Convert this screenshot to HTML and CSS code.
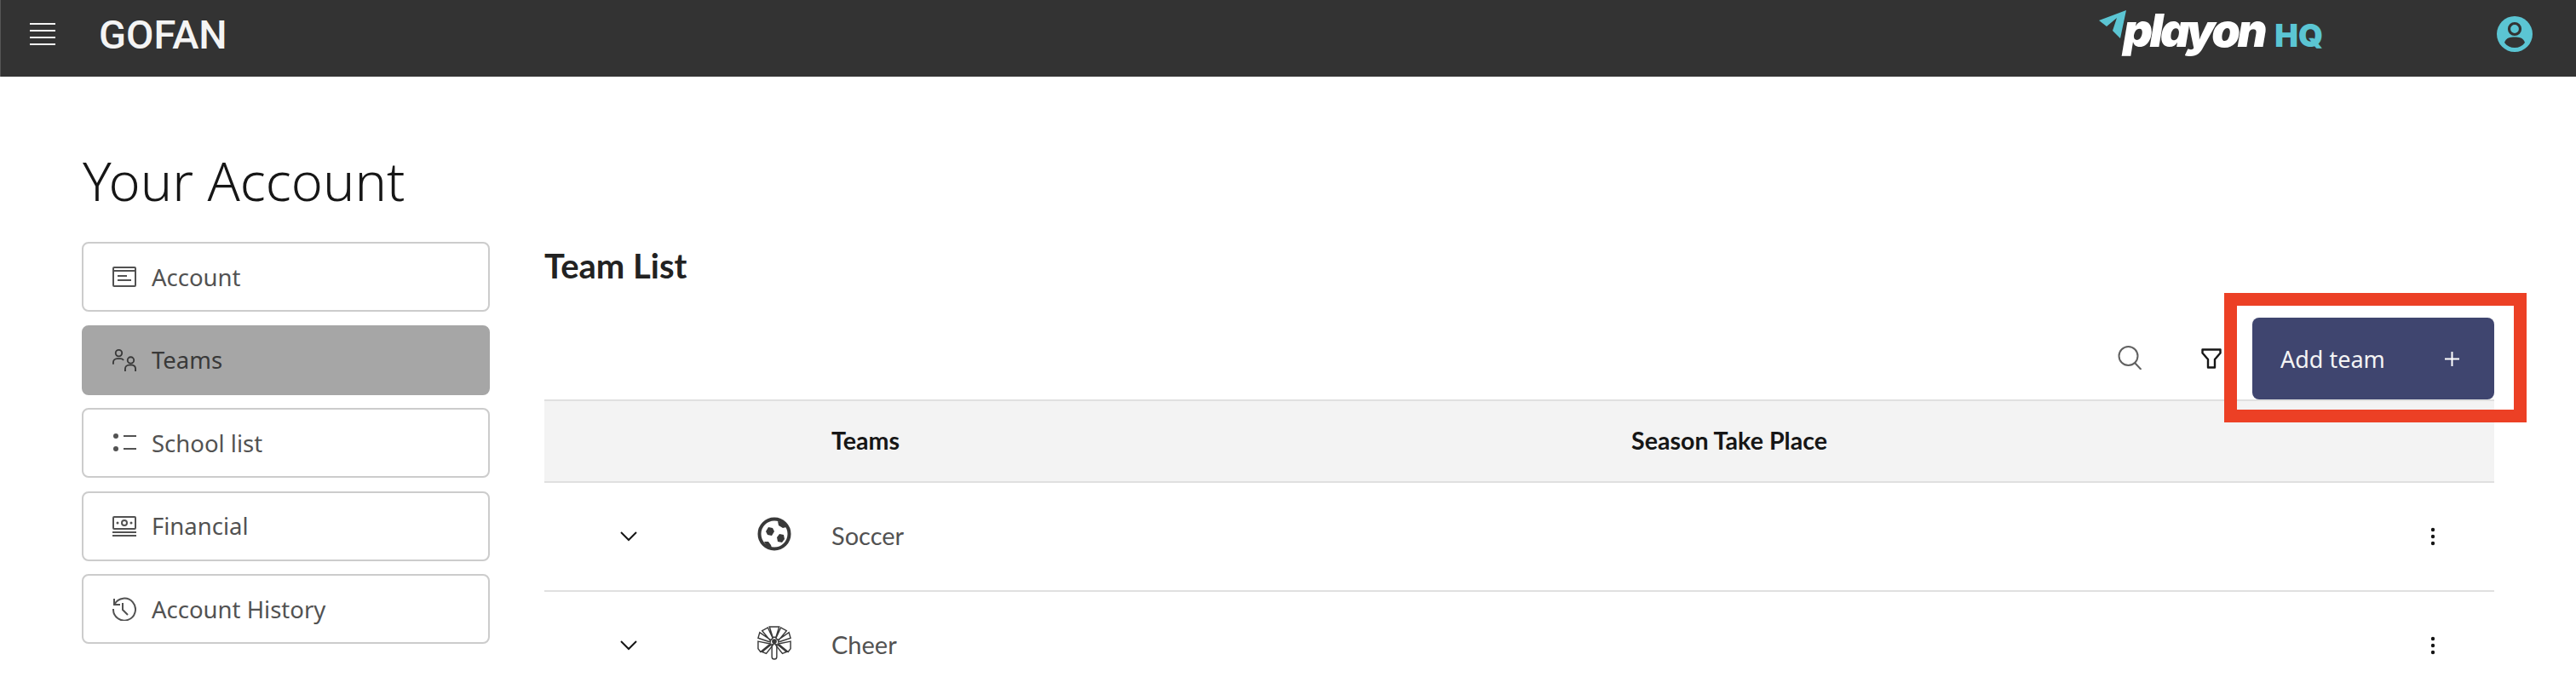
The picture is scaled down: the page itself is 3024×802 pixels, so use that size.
FILE: index.html
```html
<!DOCTYPE html>
<html lang="en">
<head>
<meta charset="utf-8">
<title>GoFan - Team List</title>
<link rel="stylesheet" href="styles.css">
</head>
<body>
<header class="topbar">
  <svg class="menu-icon" viewBox="0 0 30 26" aria-hidden="true"><path d="M0 1h30M0 9h30M0 17h30M0 25h30" fill="none" stroke="#f4f4f4" stroke-width="2"/></svg>
  <span class="brand">GOFAN</span>
  <div class="logo">
    <svg class="logo-arrow" viewBox="0 0 32 34" aria-hidden="true"><path d="M0 12 32 0 25 33 16 24 21 9 9 19Z" fill="#5bc5d3"/></svg>
    <span class="logo-word">playon</span>
    <span class="logo-hq">HQ</span>
  </div>
  <svg class="avatar" viewBox="0 0 42 42" aria-hidden="true"><circle cx="21" cy="21" r="21" fill="#5bc5d3"/><circle cx="21" cy="15" r="6.5" fill="none" stroke="#333" stroke-width="3.2"/><path d="M9 31c2-6 7-6.500 12-6.500S31 25 33 31c-3 4-7 6-12 6S12 35 9 31Z" fill="#333"/></svg>
</header>

<h1 class="page-title">Your Account</h1>

<div class="layout">
  <nav class="side">
    <a class="side-item">
      <svg class="side-icon" viewBox="0 0 28 24"><g fill="none" stroke="#525252" stroke-width="2"><rect x="1" y="1" width="26" height="22" rx="1"/><path d="M1 5h26M6 11h11M6 16h16"/></g></svg>
      <span>Account</span>
    </a>
    <a class="side-item side-active">
      <svg class="side-icon" viewBox="0 0 30 28"><g fill="none" stroke="#393939" stroke-width="2"><circle cx="8" cy="5" r="4"/><path d="M1 19v-2a5 5 0 0 1 5-5h4a5 5 0 0 1 4 2"/><circle cx="23" cy="14" r="4"/><path d="M16 28v-3a5 5 0 0 1 5-5h4a5 5 0 0 1 4 5v3"/></g></svg>
      <span>Teams</span>
    </a>
    <a class="side-item">
      <svg class="side-icon" viewBox="0 0 28 22"><circle cx="4" cy="3" r="3" fill="#525252"/><circle cx="4" cy="18" r="3" fill="#525252"/><path d="M13 3h15M13 18h15" stroke="#525252" stroke-width="2"/></svg>
      <span>School list</span>
    </a>
    <a class="side-item">
      <svg class="side-icon" viewBox="0 0 28 24"><g fill="none" stroke="#525252" stroke-width="2"><path d="M1 14V2a1 1 0 0 1 1-1h24a1 1 0 0 1 1 1v12a1 1 0 0 1-1 1H2a1 1 0 0 1-1-1ZM0 19h28M0 23h28"/><circle cx="14" cy="8" r="3"/></g><circle cx="6" cy="8" r="1.500" fill="#525252"/><circle cx="22" cy="8" r="1.500" fill="#525252"/></svg>
      <span>Financial</span>
    </a>
    <a class="side-item">
      <svg class="side-icon" viewBox="0 0 28 28"><g fill="none" stroke="#525252" stroke-width="2"><path d="M2 2v7h7"/><path d="M2.500 8.500A13 13 0 1 1 1 14"/><path d="M12 7v8l6 6"/></g></svg>
      <span>Account History</span>
    </a>
  </nav>

  <main class="content">
    <h2 class="section-title">Team List</h2>
    <div class="toolbar">
      <svg class="tool-search" viewBox="0 0 28 28"><circle cx="12.500" cy="12" r="11" fill="none" stroke="#616161" stroke-width="2"/><path d="M20 20l7.500 8" stroke="#616161" stroke-width="2"/></svg>
      <svg class="tool-filter" viewBox="0 0 24 24"><path d="M1.500 1.500h21v4L16 13v9.500H8V13L1.500 5.500Z" fill="none" stroke="#161616" stroke-width="2.400" stroke-linejoin="round"/></svg>
      <div class="add-callout">
        <button class="add-btn" type="button"><span>Add team</span><svg class="add-plus" viewBox="0 0 17 17"><path d="M8.500 0v17M0 8.500h17" stroke="#fff" stroke-width="2"/></svg></button>
      </div>
    </div>
    <div class="table">
      <div class="row row-head">
        <span class="cell-chev"></span><span class="cell-icon"></span>
        <span class="cell-name">Teams</span>
        <span class="cell-season">Season Take Place</span>
      </div>
      <div class="row">
        <span class="cell-chev"><svg class="chev" viewBox="0 0 20 12"><path d="M1 1l9 9 9-9" fill="none" stroke="#161616" stroke-width="2"/></svg></span>
        <span class="cell-icon"><svg class="sport" viewBox="0 0 40 40"><circle cx="20" cy="20" r="17.500" fill="none" stroke="#393939" stroke-width="4"/><path d="M13 12l5 1 2 4-3 5-5-1-2-4ZM26 20l5 1 1 5-3 4-5-1-1-5ZM24 5l7 2 3 5-4 1-5-3ZM8 29l5 0 3 4 1 3-6-2Z" fill="#393939"/></svg></span>
        <span class="cell-name cell-text">Soccer</span>
        <span class="cell-season"></span>
        <span class="cell-more"><svg class="dots" viewBox="0 0 6 22"><circle cx="3" cy="3" r="2.200"/><circle cx="3" cy="11" r="2.200"/><circle cx="3" cy="19" r="2.200"/></svg></span>
      </div>
      <div class="row">
        <span class="cell-chev"><svg class="chev" viewBox="0 0 20 12"><path d="M1 1l9 9 9-9" fill="none" stroke="#161616" stroke-width="2"/></svg></span>
        <span class="cell-icon"><svg class="sport" viewBox="0 0 40 42"><g fill="none" stroke="#393939" stroke-width="1.500"><path d="M14 1h12l-4 13h-4ZM5 6l7-4 6 13-3 3ZM35 6l-7-4-6 13 3 3ZM0 15l2-7 13 9v3ZM40 15l-2-7-13 9v3ZM0 19l15 3-12 10-3-4ZM40 19l-15 3 12 10 3-4ZM10 34l-5-2 11-9 2 1ZM30 34l5-2-11-9-2 1Z"/><rect x="17" y="22" width="6" height="19" rx="3"/></g><circle cx="20" cy="19" r="3" fill="#393939"/></svg></span>
        <span class="cell-name cell-text">Cheer</span>
        <span class="cell-season"></span>
        <span class="cell-more"><svg class="dots" viewBox="0 0 6 22"><circle cx="3" cy="3" r="2.200"/><circle cx="3" cy="11" r="2.200"/><circle cx="3" cy="19" r="2.200"/></svg></span>
      </div>
    </div>
  </main>
</div>
</body>
</html>
```

FILE: styles.css
```css
* { box-sizing: border-box; }
html, body { height: 802px; overflow: hidden; }
body { margin: 0; background: #fff; color: #161616; font-family: "Noto Sans", "Liberation Sans", sans-serif; }

.topbar { height: 90px; background: #333; border-left: 1px solid #555; display: flex; align-items: center; padding-left: 34px; }
.menu-icon { width: 30px; height: 26px; flex: none; margin-bottom: 10px; }
.brand { margin-left: 51px; font-family: "Roboto", sans-serif; font-size: 47px; font-weight: 500; color: #f4f4f4; margin-bottom: 8px; line-height: 52px; }
.logo { margin-left: auto; display: flex; align-items: baseline; position: relative; padding-left: 28px; margin-right: 204px; margin-bottom: 18px; }
.logo-arrow { position: absolute; left: 0; top: 10px; width: 32px; height: 34px; }
.logo-word { font-family: "Inter", sans-serif; font-weight: 900; font-style: italic; font-size: 54px; letter-spacing: -3.500px; color: #fff; line-height: 68px; }
.logo-hq { margin-left: 12px; font-family: "Inter", sans-serif; font-weight: 900; font-size: 37px; color: #5bc5d3; }
.avatar { width: 42px; height: 42px; flex: none; margin-right: 51px; margin-bottom: 10px; }

.page-title { margin: 80px 0 0 97px; font-size: 63px; font-weight: 350; line-height: 84px; color: #161616; }

.layout { display: flex; margin-top: 30px; padding-left: 96px; }
.side { width: 479px; flex: none; display: flex; flex-direction: column; gap: 15.500px; }
.side-item { height: 82px; border: 2px solid #ccc; border-radius: 8px; display: flex; align-items: center; padding-left: 34px; font-size: 27.500px; color: #525252; }
.side-active { background: #a6a6a6; border-color: #a6a6a6; color: #393939; }
.side-icon { width: 28px; height: 28px; flex: none; margin-right: 18px; }

.content { margin-left: 64px; width: 2289px; margin-top: 2px; }
.section-title { margin: 0; font-family: "Lato", sans-serif; font-size: 40px; font-weight: 700; line-height: 52px; color: #222; }
.toolbar { display: flex; justify-content: flex-end; align-items: center; height: 96px; margin-top: 35px; }
.tool-search { width: 28px; height: 28px; flex: none; margin-right: 70px; margin-bottom: 3px; }
.tool-filter { width: 24px; height: 24px; flex: none; margin-right: 36px; }
.add-callout { position: relative; flex: none; }
.add-callout::after { content: ""; position: absolute; left: -33px; right: -38px; top: -29px; bottom: -27px; border: 15px solid #ec4025; pointer-events: none; z-index: 1; }
.add-btn { width: 284px; height: 96px; border: 0; border-radius: 8px; background: #3f456f; color: #f4f4f4; display: flex; align-items: center; justify-content: space-between; padding: 0 41px 0 33px; font: 400 27px "Noto Sans", sans-serif; }
.add-plus { width: 17px; height: 17px; }

.table { display: flex; flex-direction: column; }
.row { display: flex; align-items: center; height: 128px; border-bottom: 2px solid #e0e0e0; }
.row-head { height: 98px; background: #f3f3f3; border-top: 2px solid #e0e0e0; font-family: "Lato", sans-serif; font-weight: 700; font-size: 28.600px; }
.cell-chev { width: 198px; flex: none; display: flex; justify-content: center; }
.cell-icon { width: 139px; padding-left: 5px; flex: none; display: flex; justify-content: center; }
.cell-name { width: 939px; flex: none; font-family: "Lato", sans-serif; padding-bottom: 3px; }
.cell-text { font-size: 29px; color: #525252; font-weight: 400; }
.cell-season { flex: 1; padding-bottom: 3px; }
.cell-more { width: 75px; display: flex; justify-content: flex-start; }
.chev { width: 20px; height: 12px; }
.sport { width: 40px; height: 40px; margin-bottom: 6px; }
.dots { width: 6px; height: 22px; fill: #161616; }
```
